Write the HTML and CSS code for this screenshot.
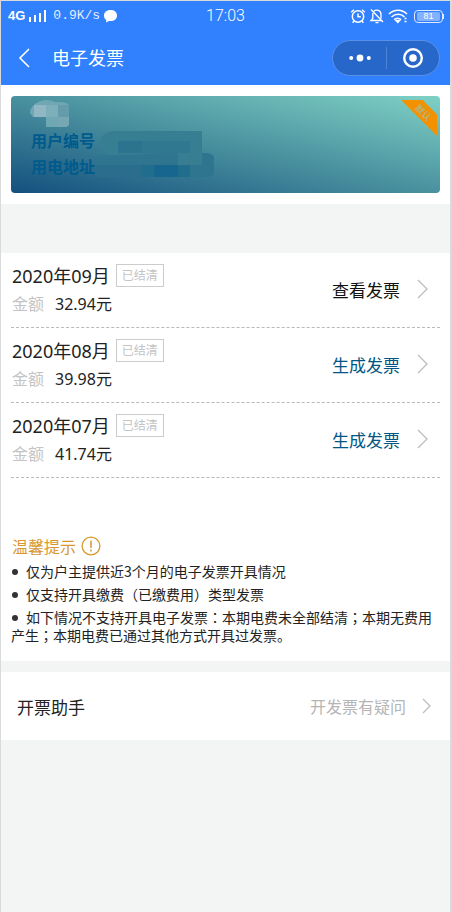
FILE: index.html
```html
<!DOCTYPE html>
<html lang="zh-CN">
<head>
<meta charset="utf-8">
<meta name="viewport" content="width=device-width, initial-scale=1">
<title>电子发票</title>
<link rel="stylesheet" href="styles.css">
</head>
<body>
<div class="screen">
  <header class="top">
    <div class="status">
      <div class="status-left">
        <span class="net">4G</span>
        <svg width="19" height="14" viewBox="0 0 19 14" fill="#fff" aria-hidden="true"><path d="M1 8h2v5H1zM6 6h2v7H6zM11 4h2v9h-2zM16 1h2v12h-2z"/></svg>
        <span class="speed">0.9K/s</span>
        <svg width="15" height="14" viewBox="0 0 15 14" fill="#fff" aria-hidden="true"><path d="M7.500 1C3.600 1 1 3.400 1 6.500c0 2 .9 3.500 2.300 4.500L3 13.500 6 12c5 .6 8-2 8-5.500S11.200 1 7.500 1z"/></svg>
      </div>
      <span class="clock">17:03</span>
      <div class="status-right">
        <svg width="16" height="16" viewBox="0 0 16 16" fill="none" stroke="#fff" stroke-width="1.500" aria-hidden="true"><circle cx="8" cy="8.500" r="5.700"/><path d="M8 5.500v3.200h2.800M1.200 4.200 4 1.700M14.800 4.200 12 1.700M4 13l-1.300 1.700M12 13l1.300 1.700"/></svg>
        <svg width="16" height="16" viewBox="0 0 16 16" fill="none" stroke="#fff" stroke-width="1.300" aria-hidden="true"><path d="M4.800 3.300C7.500.8 12 2.300 12 6.500v4M3.800 5v5.500L2 12.500h10.500M2 1.500l12 12.500M6.500 14.700h3"/></svg>
        <svg width="20" height="16" viewBox="0 0 20 16" fill="none" stroke="#fff" stroke-width="1.600" aria-hidden="true"><path d="M1 6c5-5 13-5 18 0M3.500 9c4-3.600 9.500-3.600 13 0M6.200 11.600c2.200-1.800 4.600-1.800 6.800 0"/><path d="M8 12.500h3.600L9.800 14.500zM16.500 10.500h2M16.500 13.500h2" stroke-width="1.500"/></svg>
        <span class="battery"><span class="charge">81</span></span>
      </div>
    </div>
    <div class="nav">
      <button class="back" type="button" aria-label="返回"><svg width="12" height="20" viewBox="0 0 12 20" fill="none" stroke="#fff" stroke-width="1.600"><path d="M11 1 2 10l9 9"/></svg></button>
      <h1>电子发票</h1>
      <div class="capsule">
        <button type="button" aria-label="更多"><svg width="22" height="8" viewBox="0 0 22 8" fill="#fff"><circle cx="2.200" cy="4" r="2"/><circle cx="11" cy="4" r="3.400"/><circle cx="19.800" cy="4" r="2"/></svg></button>
        <button type="button" aria-label="关闭"><svg width="22" height="22" viewBox="0 0 22 22"><circle cx="11" cy="11" r="8.800" fill="none" stroke="#fff" stroke-width="2.400"/><circle cx="11" cy="11" r="3.800" fill="#fff"/></svg></button>
      </div>
    </div>
  </header>

  <main>
    <section class="account">
      <div class="card">
        <svg class="mosaic" width="210" height="97" viewBox="0 0 210 97" aria-hidden="true">
          <path fill="#6fa7b3" d="M19 17c0-5 3-7 5-9 6-5 15-5 20-2 6 0 14 0 14 4v17c0 4-4 4-7 4H35V21H22z"/>
          <path fill="#91b7c5" d="M23 9h12v12H23z"/><path fill="#7dafbb" d="M35 9h12v12H35z"/><path fill="#659cab" d="M47 9h11v12H47z"/><path fill="#78a7b4" d="M47 21h11v6c0 3-2 4-4 4h-7z"/>
          <path fill="#377e93" d="M89 48c1-8 5-13 15-13h87v22l-22 4-65-1c-9 0-13-5-15-12z"/>
          <path fill="#2b738f" d="M107 45h24v12h-24z"/><path fill="#30788f" d="M131 45h48v12h-48z"/>
          <path fill="#2f7590" d="M84 81V60l47-2 20-1h42c7 0 10 2 10 5v15c0 3-3 4-7 4z"/>
          <path fill="#2a6d8c" d="M84 69h47v12H84z"/><path fill="#176690" d="M143 69h24v12h-24z"/><path fill="#206d8e" d="M131 69h12v12h-12zM167 69h12v12h-12z"/><path fill="#397d93" d="M167 57h24v12h-24z"/>
        </svg>
        <p>用户编号</p>
        <p>用电地址</p>
        <div class="ribbon"><span>默认</span></div>
      </div>
    </section>

    <ul class="bills">
      <li>
        <div class="bill">
          <div class="month">2020年09月<span class="tag">已结清</span></div>
          <div class="amount"><span>金额</span>32.94元</div>
        </div>
        <a class="action view" href="#">查看发票<svg width="12" height="20" viewBox="0 0 12 20"><path d="M1 1l9 9-9 9"/></svg></a>
      </li>
      <li>
        <div class="bill">
          <div class="month">2020年08月<span class="tag">已结清</span></div>
          <div class="amount"><span>金额</span>39.98元</div>
        </div>
        <a class="action" href="#">生成发票<svg width="12" height="20" viewBox="0 0 12 20"><path d="M1 1l9 9-9 9"/></svg></a>
      </li>
      <li>
        <div class="bill">
          <div class="month">2020年07月<span class="tag">已结清</span></div>
          <div class="amount"><span>金额</span>41.74元</div>
        </div>
        <a class="action" href="#">生成发票<svg width="12" height="20" viewBox="0 0 12 20"><path d="M1 1l9 9-9 9"/></svg></a>
      </li>
    </ul>

    <section class="tips">
      <h2>温馨提示<svg width="20" height="20" viewBox="0 0 20 20" fill="none" stroke="#d8982f" aria-hidden="true"><circle cx="10" cy="10" r="8.900" stroke-width="1.300"/><path d="M10 4.500v7.500M10 13.500v2" stroke-width="1.500"/></svg></h2>
      <ul>
        <li>仅为户主提供近3个月的电子发票开具情况</li>
        <li>仅支持开具缴费（已缴费用）类型发票</li>
        <li>如下情况不支持开具电子发票<span class="mid" lang="zh-TW">：</span>本期电费未全部结清<span class="mid" lang="zh-TW">；</span>本期无费用产生<span class="mid" lang="zh-TW">；</span>本期电费已通过其他方式开具过发票。</li>
      </ul>
    </section>

    <a class="helper" href="#">
      <span class="helper-name">开票助手</span>
      <span class="helper-ask">开发票有疑问</span>
      <svg width="10" height="16" viewBox="0 0 10 16"><path d="M1 1l7 7-7 7"/></svg>
    </a>
  </main>
</div>
</body>
</html>
```

FILE: styles.css
```css
* { box-sizing: border-box; }

body {
  margin: 0;
  background: #f3f5f5;
  color: #222;
  font-family: "Noto Sans", "Noto Sans CJK SC", sans-serif;
  font-size: 16px;
}

h1, h2, p, ul { margin: 0; padding: 0; font-weight: 400; }
ul { list-style: none; }
a { text-decoration: none; }
svg { display: block; flex: none; }
button { padding: 0; border: 0; background: none; }

.screen {
  min-height: 100vh;
  border: solid #d9dadb;
  border-width: 1px 2px 0 1px;
}

.top { height: 84px; background: #3180fe; color: #fff; }

.status {
  display: grid;
  grid-template-columns: 1fr auto 1fr;
  align-items: center;
  height: 30px;
  padding: 0 7px;
}
.status-left, .status-right { display: flex; align-items: center; }
.status-left { gap: 3px; }
.status-right { justify-content: flex-end; gap: 3px; }
.net { font: 700 13px/16px "Liberation Sans", sans-serif; }
.speed { padding-left: 3px; font: 13px/16px "Liberation Mono", monospace; color: #e4eeff; }
.clock { font: 300 16px/20px Roboto, sans-serif; }
.battery {
  position: relative;
  width: 29px;
  height: 13px;
  margin-left: 3px;
  padding: 1px 2px;
  border: 1px solid #dce9ff;
  border-radius: 4px;
}
.battery::after {
  content: "";
  position: absolute;
  top: 3px;
  right: -2px;
  width: 1px;
  height: 5px;
  background: #dce9ff;
}
.charge {
  display: block;
  border-radius: 2px;
  background: #83b1fc;
  font: 9px/9px "Liberation Sans", sans-serif;
  text-align: center;
}

.nav { display: flex; align-items: center; height: 54px; padding: 0 10px 0 17px; }
.nav h1 { flex: 1; margin-left: 22px; font-size: 18px; line-height: 24px; }
.capsule {
  display: flex;
  width: 108px;
  height: 36px;
  border: 1px solid #5a91e8;
  border-radius: 18px;
  background: #2867ca;
}
.capsule button { flex: 1; display: grid; place-items: center; }
.capsule button + button { position: relative; }
.capsule button + button::before {
  content: "";
  position: absolute;
  top: 6px;
  left: 0;
  width: 1px;
  height: 22px;
  background: #4d82d6;
}

.account { padding: 11px 10px; background: #fff; }
.card {
  position: relative;
  height: 97px;
  padding: 32px 20px 0;
  border-radius: 4px;
  background: linear-gradient(to top right, #14507e, #4a919f 50%, #7fd1c5);
  color: #005a8c;
}
.card p { position: relative; font-weight: 700; line-height: 26px; }
.mosaic { position: absolute; top: 0; left: 0; }
.ribbon {
  position: absolute;
  top: 4px;
  right: 3px;
  width: 36px;
  height: 36px;
  background: #f39100;
  clip-path: polygon(0 0, 60% 0, 100% 40%, 100% 100%);
}
.ribbon span {
  position: absolute;
  top: 7px;
  left: 13px;
  font-size: 9px;
  font-weight: 700;
  line-height: 12px;
  color: #b5b57c;
  transform: rotate(45deg);
}

.bills { margin-top: 49px; padding: 0 10px; background: #fff; }
.bills li {
  display: flex;
  align-items: center;
  justify-content: space-between;
  height: 75px;
  padding-bottom: 2px;
  border-bottom: 1px dashed #b9b9b9;
}
.bill { padding-left: 1px; }
.month, .amount { display: flex; align-items: center; height: 28px; }
.month { gap: 6px; font-size: 18px; }
.tag {
  padding: 0 5px;
  border: 1px solid #ccc;
  font-size: 12px;
  line-height: 21px;
  color: #c4c4c4;
}
.amount span { margin-right: 11px; color: #c4c4c4; }
.action {
  display: flex;
  align-items: center;
  gap: 17px;
  padding-right: 11px;
  font-size: 17px;
  color: #005684;
}
.action.view { color: #111; }
.action svg, .helper svg { fill: none; stroke: #bdbdbd; stroke-width: 1.3px; }

.tips { padding: 56px 10px 17px; background: #fff; }
.tips h2 {
  display: flex;
  align-items: center;
  gap: 5px;
  height: 24px;
  margin-bottom: 4px;
  padding-left: 1px;
  font-size: 16px;
  color: #d8982f;
}
.tips li {
  margin-bottom: 5px;
  font-family: "Noto Sans CJK SC", sans-serif;
  font-size: 14px;
  line-height: 18px;
}
.tips li:last-child { margin-bottom: 0; }
.tips li::before {
  content: "";
  display: inline-block;
  width: 6px;
  height: 6px;
  margin: 0 8px 3px 1px;
  border-radius: 50%;
  background: #333;
  vertical-align: middle;
}
.mid { font-family: "Noto Sans CJK TC", sans-serif; }

.helper {
  display: flex;
  align-items: center;
  height: 68px;
  margin-top: 11px;
  padding: 0 18px 0 16px;
  background: #fff;
}
.helper-name { flex: 1; font-size: 17px; color: #222; }
.helper-ask { margin-right: 16px; color: #b5b5b5; }
```
